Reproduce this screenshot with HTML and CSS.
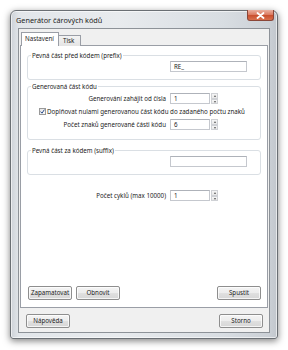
FILE: index.html
```html
<!DOCTYPE html>
<html lang="cs">
<head>
<meta charset="utf-8">
<title>Generátor čárových kódů</title>
<link rel="stylesheet" href="styles.css">
</head>
<body>
<div class="window">
  <div class="titlebar">
    <span class="title">Generátor čárových kódů</span>
    <div class="close"><svg width="9" height="7" viewBox="0 0 9 7"><path d="M1.5 1 L7.5 6 M7.5 1 L1.5 6" stroke="#fff" stroke-width="1.8" stroke-linecap="round"/></svg></div>
  </div>
  <div class="client">
    <div class="tabs">
      <div class="tab active">Nastavení</div>
      <div class="tab">Tisk</div>
    </div>
    <div class="page">
      <fieldset class="group g1">
        <legend>Pevná část před kódem (prefix)</legend>
        <div class="row"><span class="lbl"></span><div class="input wide">RE_</div></div>
      </fieldset>
      <fieldset class="group g2">
        <legend>Generovaná část kódu</legend>
        <div class="row"><span class="lbl">Generování zahájit od čísla</span><div class="input">1</div><div class="spin"><span class="up"></span><span class="down"></span></div></div>
        <div class="check-row"><span class="checkbox"><svg width="5" height="5" viewBox="0 0 5 5"><path d="M0.6 2.6 L2 4.2 L4.4 0.6" fill="none" stroke="#2b4d8c" stroke-width="1"/></svg></span><span>Doplňovat nulami generovanou část kódu do zadaného počtu znaků</span></div>
        <div class="row"><span class="lbl">Počet znaků generované části kódu</span><div class="input">6</div><div class="spin"><span class="up"></span><span class="down"></span></div></div>
      </fieldset>
      <fieldset class="group g3">
        <legend>Pevná část za kódem (suffix)</legend>
        <div class="row"><span class="lbl"></span><div class="input wide"></div></div>
      </fieldset>
      <div class="row cycles"><span class="lbl">Počet cyklů (max 10000)</span><div class="input">1</div><div class="spin"><span class="up"></span><span class="down"></span></div></div>
      <div class="page-buttons">
        <button class="btn">Zapamatovat</button>
        <button class="btn">Obnovit</button>
        <span class="spacer"></span>
        <button class="btn">Spustit</button>
      </div>
    </div>
    <div class="footer">
      <button class="btn">Nápověda</button>
      <span class="spacer"></span>
      <button class="btn">Storno</button>
    </div>
  </div>
</div>
</body>
</html>
```
FILE: styles.css
```css
* { box-sizing: border-box; }
html, body { margin: 0; padding: 0; background: #fff; }
body {
  width: 288px; height: 350px; overflow: hidden;
  font-family: "Noto Sans", "Open Sans", sans-serif;
  font-size: 6.2px; color: #1c1c1c;
  padding: 10px 0 0 10px;
}
.window {
  width: 268px; height: 329px;
  border: 1px solid #6a6f74;
  border-radius: 6px 6px 3px 3px;
  background: linear-gradient(90deg, #cdd2d8 0%, #e2e6ea 3%, #e8ebee 40%, #d8dde2 80%, #cbd0d6 97%, #c2c7cd 100%);
  box-shadow: 0 2px 7px rgba(0,0,0,0.5), inset 0 0 0 1px rgba(255,255,255,0.6);
  padding: 0 7px 5px 7px;
  display: flex; flex-direction: column;
}
.titlebar {
  height: 18px; display: flex; align-items: center; position: relative;
}
.title { font-size: 7.3px; color: #1e1e1e; margin-left: -2px; padding-top: 1px; }
.close {
  position: absolute; top: -1px; right: -4px;
  width: 27px; height: 11px;
  border: 1px solid #8a4638; border-top: none;
  border-radius: 0 0 3px 3px;
  background: linear-gradient(180deg, #eab0a0 0%, #dc7c62 45%, #c9502f 55%, #d9704c 100%);
  display: flex; align-items: center; justify-content: center;
}
.client {
  flex: 1;
  border: 1px solid #8d9298;
  background: #f0f0f0;
  padding: 3px 1px 4px 1px;
  display: flex; flex-direction: column;
}
.tabs { display: flex; align-items: flex-end; height: 13px; margin-left: 1px; position: relative; z-index: 1; }
.tab {
  height: 11px; padding: 0 4px; line-height: 10px;
  border: 1px solid #9a9ea6; border-bottom: none;
  background: linear-gradient(180deg, #f3f3f3, #e4e4e4);
  margin-bottom: -1px;
}
.tab.active { height: 14px; background: #fff; width: 38px; padding: 1px 3px 0; margin-right: -1px; }
.tab + .tab { width: 23px; }
.page {
  height: 263px;
  border: 1px solid #9a9ea6; background: #fff;
  display: flex; flex-direction: column;
  padding: 5px 6px 7px 6px;
}
.group {
  border: 1px solid #dadfe4; border-radius: 3px;
  margin: 0; padding: 0 0 7px 0; min-width: 0;
}
.group legend { padding: 0 1px; margin-left: 3px; line-height: 9px; }
.g2 { margin-top: 2px; padding-bottom: 9px; }
.g3 { margin-top: 6px; }
.row { display: flex; align-items: center; height: 11px; margin-top: 1px; }
.lbl { width: 138px; text-align: right; margin-right: 4px; white-space: nowrap; }
.input {
  width: 40px; height: 11px;
  border: 1px solid #c5c8ce; border-top-color: #aeb2b9;
  background: #fff; padding-left: 3px; line-height: 9px;
}
.input.wide { width: 77px; }
.spin { display: flex; flex-direction: column; margin-left: 1px; height: 11px; width: 7px; }
.spin span {
  flex: 1; border: 1px solid #cfd1d5; background: linear-gradient(180deg, #f6f6f6, #e8e8e8);
  position: relative;
}
.spin span::after {
  content: ""; position: absolute; left: 1.5px; top: 1px;
  border-left: 1.5px solid transparent; border-right: 1.5px solid transparent;
}
.spin .up::after { border-bottom: 2px solid #5a5a5a; }
.spin .down::after { border-top: 2px solid #5a5a5a; }
.g2 .row:first-of-type { margin-top: 2px; }
.check-row { display: flex; align-items: center; height: 9px; margin: 3px 0 3px 11px; white-space: nowrap; }
.checkbox {
  width: 7px; height: 7px; border: 1px solid #999; background: linear-gradient(135deg, #e6e6e6, #fbfbfb);
  display: flex; align-items: center; justify-content: center; margin-right: 1px;
}
.cycles { margin-top: 15px; margin-left: 1px; }
.page-buttons { margin-top: auto; display: flex; padding-left: 1px; gap: 4px; }
.spacer { flex: 1; }
.btn {
  font: inherit; color: #1c1c1c;
  height: 14px; padding: 0; width: 44px;
  border: 1px solid #8e8e8e; border-radius: 2px;
  background: linear-gradient(180deg, #f4f4f4 0%, #ededed 48%, #e0e0e0 52%, #d6d6d6 100%);
  box-shadow: inset 0 0 0 1px rgba(255,255,255,0.75);
  line-height: 12px;
}
.footer { display: flex; margin-top: 6px; padding: 0 5px 0 6px; }
```
